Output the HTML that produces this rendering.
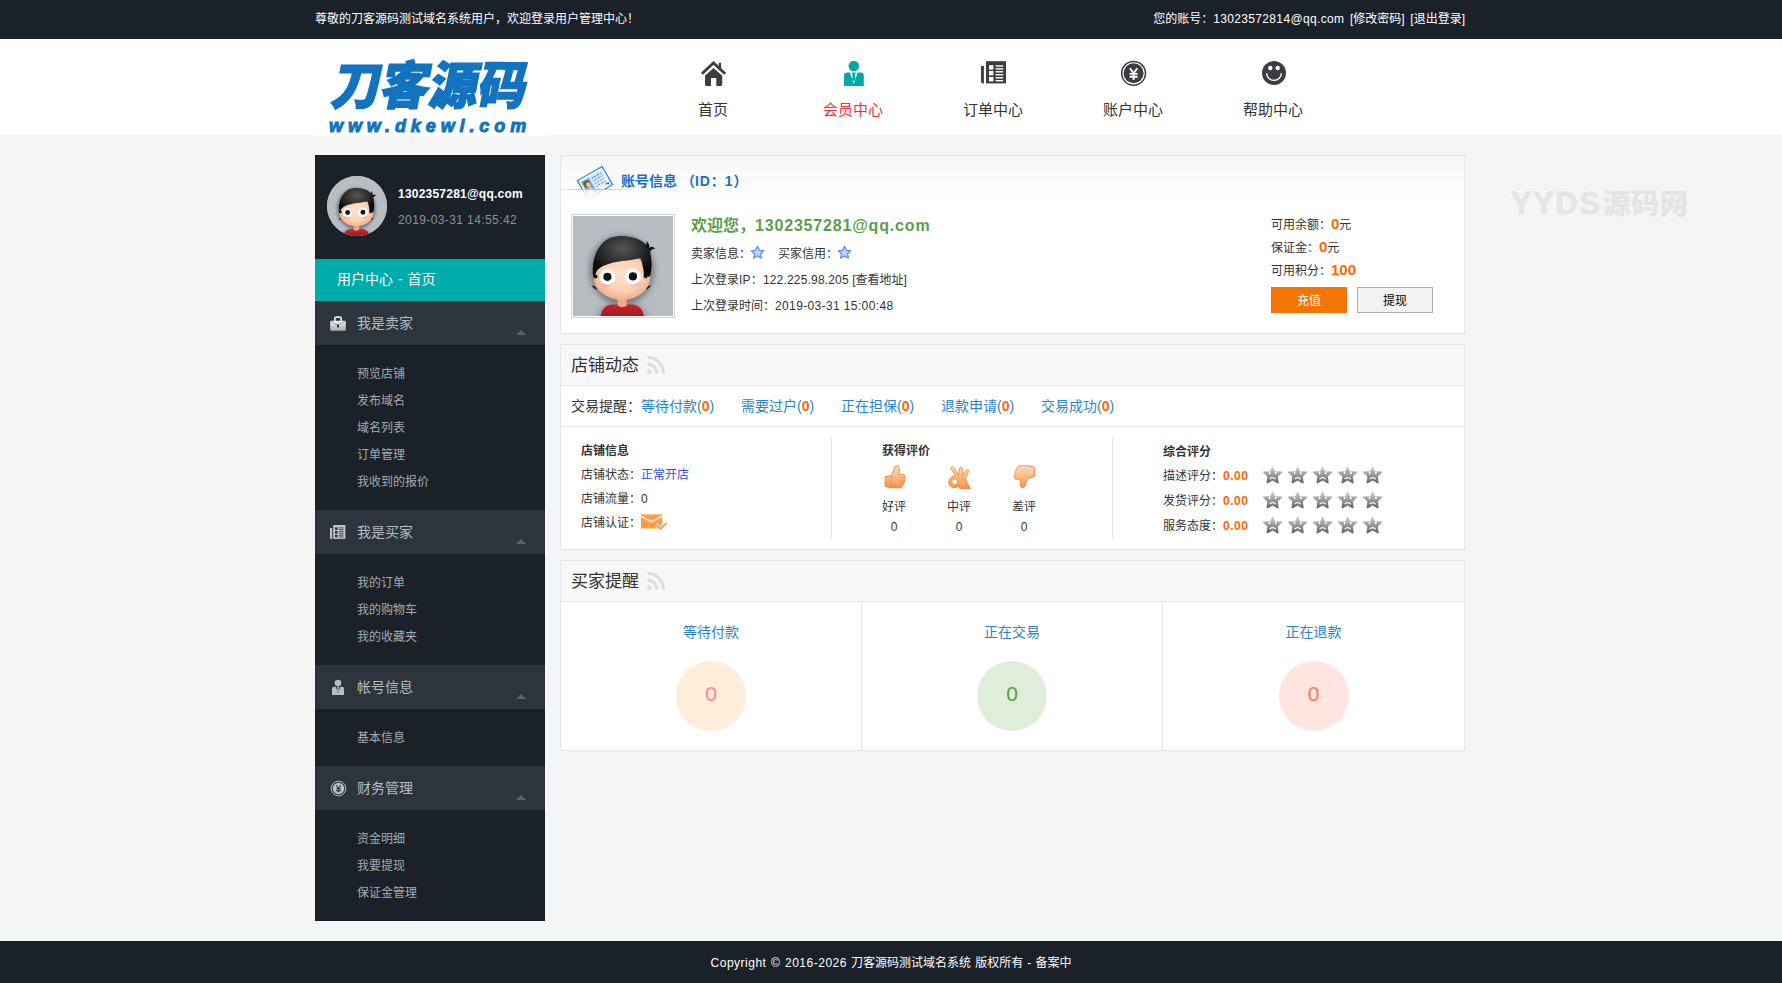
<!DOCTYPE html>
<html lang="zh-CN">
<head>
<meta charset="utf-8">
<title>用户管理中心</title>
<style>
*{margin:0;padding:0;box-sizing:border-box;}
html,body{width:1782px;height:983px;overflow:hidden;}
body{background:#f5f5f5;font-family:"Liberation Sans","Noto Sans CJK SC",sans-serif;font-size:12px;color:#333;position:relative;}
a{text-decoration:none;color:inherit;}
ul{list-style:none;}
/* top bar */
#topbar{position:absolute;left:0;top:0;width:1782px;height:39px;background:#1b2129;color:#fff;font-size:12px;line-height:39px;}
#topbar .l{position:absolute;left:315px;top:0;white-space:nowrap;}
#topbar .r{position:absolute;right:317px;top:0;white-space:nowrap;word-spacing:2.3px;}
/* header */
#header{position:absolute;left:0;top:39px;width:1782px;height:96px;background:#fff;}
#logo{position:absolute;left:315px;top:0;width:230px;height:97px;background:#fff;}
#logo .cn{position:absolute;left:12px;top:16px;white-space:nowrap;font-weight:900;font-size:51px;line-height:64px;color:#1273bf;-webkit-text-stroke:1.5px #1273bf;transform-origin:0 100%;transform:skewX(-11deg) scaleX(0.955);letter-spacing:0;}
#logo .en{position:absolute;left:14px;top:78px;white-space:nowrap;font-weight:bold;font-style:italic;font-size:18px;line-height:18px;color:#1273bf;-webkit-text-stroke:1px #1273bf;letter-spacing:4.9px;}
#nav{position:absolute;left:643px;top:0;height:96px;}
#nav a{position:absolute;top:0;width:140px;height:96px;text-align:center;font-size:15px;color:#333;}
#nav a span{position:absolute;left:0;width:140px;top:60px;line-height:22px;}
#nav a svg{position:absolute;left:55px;top:19px;width:30px;height:30px;}
#nav a.on{color:#f0323c;}
/* sidebar */
#side{position:absolute;left:315px;top:155px;width:230px;height:766px;background:#1b2129;}
#side .user{height:104px;position:relative;}
#side .user .av{position:absolute;left:12px;top:21px;width:60px;height:60px;border-radius:50%;overflow:hidden;background:#b9bec6;}
#side .user .em{position:absolute;left:83px;top:30px;color:#fff;font-size:12px;font-weight:bold;letter-spacing:.22px;line-height:18px;white-space:nowrap;}
#side .user .dt{position:absolute;left:83px;top:56px;letter-spacing:.4px;color:#8a929b;font-size:12px;line-height:18px;white-space:nowrap;}
#side .home{height:42px;background:#00abab;color:#fff;font-size:14px;line-height:40px;padding-left:22px;word-spacing:1px;}
#side h3{height:44px;background:#2c343d;color:#b5bcc4;font-size:14px;font-weight:normal;line-height:44px;padding-left:42px;position:relative;}
#side h3 svg{position:absolute;left:15px;top:14px;width:16px;height:16px;}
#side h3 i{position:absolute;left:201px;top:29px;width:0;height:0;border-left:5px solid transparent;border-right:5px solid transparent;border-bottom:5px solid #59616a;}
#side ul{padding:15px 0 15px 42px;}
#side li{height:27px;line-height:29px;color:#a4abb3;font-size:12px;}
/* main */
.panel{position:absolute;left:560px;width:905px;background:#fff;border:1px solid #e6e6e6;}

/* panel 1 */
#p1{background:linear-gradient(#f6f6f6,#fff 50px);}
#p1 .idc{position:absolute;left:10px;top:6px;width:56px;height:42px;}
#p1 .shelf{position:absolute;left:0;top:33px;width:76px;height:1px;background:linear-gradient(90deg,rgba(190,190,190,.15),rgba(190,190,190,.95) 22%,rgba(190,190,190,.95) 62%,rgba(190,190,190,0));}
#p1 .ttl{position:absolute;left:60px;top:15px;font-size:14px;font-weight:bold;color:#1b6fc2;line-height:20px;white-space:nowrap;}
#p1 .frame{position:absolute;left:10px;top:58px;width:104px;height:104px;border:1px solid #d4d4d4;background:#fff;padding:1px;}
#p1 .frame svg{display:block;width:100px;height:100px;}
#p1 .wel{position:absolute;left:130px;top:58px;font-size:16px;font-weight:bold;color:#5a9e4b;line-height:24px;white-space:nowrap;}
#p1 .ln{position:absolute;left:130px;font-size:12px;color:#333;line-height:20px;white-space:nowrap;}
#p1 .ln svg{width:15px;height:15px;vertical-align:-2px;margin-left:-1px;margin-right:1px;}
#p1 .bal{position:absolute;left:710px;font-size:12px;color:#333;line-height:22px;white-space:nowrap;}
#p1 .bal b{font-size:15px;color:#f60;}
#p1 .btn{position:absolute;top:131px;width:76px;height:26px;font-size:12px;line-height:26px;text-align:center;}
#p1 .b1{left:710px;background:#f47406;color:#fff;line-height:28px;}
#p1 .b2{left:796px;background:#f3f3f3;border:1px solid #adadad;color:#000;}
/* panel 2/3 */
.panel .hd{height:41px;box-sizing:border-box;background:#f7f7f7;border-bottom:1px solid #e6e6e6;position:relative;}
.panel .hd span{position:absolute;left:10px;top:9px;font-size:17px;line-height:24px;color:#333;white-space:nowrap;}
.panel .hd svg{position:absolute;left:85px;top:9.5px;width:20px;height:20px;}
#p2 .tips{height:41px;box-sizing:border-box;border-bottom:1px solid #e6e6e6;position:relative;font-size:14px;line-height:40px;white-space:nowrap;}
#p2 .tips span{position:absolute;left:10px;top:0;color:#333;}
#p2 .tips a{position:absolute;top:0;color:#2a85c6;}
#p2 .tips b{color:#f60;}
#p2 .col{position:absolute;top:94px;font-size:12px;color:#333;line-height:24px;white-space:nowrap;}
#p2 .col h4{font-size:12px;line-height:24px;}
#p2 .col b.o{color:#f60;letter-spacing:.5px;}
#p2 .mail{width:28px;height:18px;vertical-align:-4px;margin-left:-1px;overflow:visible;}
#p2 .vl{position:absolute;top:92px;width:1px;height:102px;background:#e6e6e6;}
#p2 .rate{position:absolute;top:120px;width:60px;text-align:center;font-size:12px;line-height:20px;color:#333;}
#p2 .rate svg{display:block;margin:0 auto 8px;width:24px;height:24px;}
#p2 .stars{position:absolute;left:701px;height:20px;}
#p2 .stars svg{width:125px;height:20px;display:block;}
#p3 .c{position:absolute;top:41px;width:301px;height:148px;box-sizing:border-box;text-align:center;}
#p3 .c a{display:block;margin-top:19px;font-size:14px;line-height:22px;color:#2a85c6;}
#p3 .c i{display:block;margin:18px auto 0;width:70px;height:70px;border-radius:50%;font-style:normal;font-size:21px;line-height:66px;}
#footer{word-spacing:.8px;position:absolute;left:0;top:941px;width:1782px;height:42px;background:#1b2129;color:#fff;font-size:12px;line-height:44px;text-align:center;}
#wm{position:absolute;left:1511px;top:184px;font-size:28.5px;font-weight:900;color:#e5e5e5;white-space:nowrap;line-height:40px;}
#wm span{font-size:31px;letter-spacing:1.5px;-webkit-text-stroke:.9px #e5e5e5;margin-right:1px;}
</style>
</head>
<body>
<svg width="0" height="0" style="position:absolute">
<defs>
<radialGradient id="gbg" cx="50%" cy="45%" r="75%"><stop offset="0" stop-color="#bec2c8"/><stop offset="1" stop-color="#b6babf"/></radialGradient>
<radialGradient id="gface" cx="50%" cy="45%" r="60%"><stop offset="0" stop-color="#ffe3cf"/><stop offset=".6" stop-color="#fbd0b2"/><stop offset="1" stop-color="#eba57c"/></radialGradient>
<radialGradient id="ghair" cx="50%" cy="30%" r="60%"><stop offset="0" stop-color="#565656"/><stop offset=".7" stop-color="#222"/><stop offset="1" stop-color="#0a0a0a"/></radialGradient>
<linearGradient id="gshirt" x1="0" y1="0" x2="0" y2="1"><stop offset="0" stop-color="#c8242c"/><stop offset="1" stop-color="#a81820"/></linearGradient>
<filter id="fblur" x="-30%" y="-30%" width="160%" height="160%"><feGaussianBlur stdDeviation="3"/></filter>
<filter id="fblur1" x="-30%" y="-30%" width="160%" height="160%"><feGaussianBlur stdDeviation="1.2"/></filter>
<linearGradient id="gth" x1="0" y1="0" x2="0" y2="1"><stop offset="0" stop-color="#ffdcc0"/><stop offset=".5" stop-color="#fdba88"/><stop offset="1" stop-color="#f7924a"/></linearGradient><linearGradient id="gth2" x1="0" y1="1" x2="0" y2="0"><stop offset="0" stop-color="#ffdcc0"/><stop offset=".5" stop-color="#fdba88"/><stop offset="1" stop-color="#f7924a"/></linearGradient>
<linearGradient id="gstar" x1="0" y1="0" x2="0" y2="1"><stop offset="0" stop-color="#d6d6d6"/><stop offset=".45" stop-color="#a2a2a2"/><stop offset="1" stop-color="#606060"/></linearGradient>
<symbol id="sadstar" viewBox="0 0 20 18" overflow="visible"><path d="M9.600 0L12 5.200 19.200 5.600 19.200 6.600 14.900 10.400 15.700 17.300 14.300 17.300 9.600 14.600 4.900 17.300 3.500 17.300 4.300 10.400 0 6.600 0 5.600 7.200 5.200Z" fill="url(#gstar)"/><rect x="5.800" y="5.500" width="1.500" height="2.800" rx=".6" fill="#fff"/><rect x="12.100" y="5.500" width="1.500" height="2.800" rx=".6" fill="#fff"/><path d="M6.600 13.200Q9.600 10.200 12.700 13.200" fill="none" stroke="#fff" stroke-width="1.200"/></symbol>
<symbol id="avatar" viewBox="0 0 100 100">
<rect width="100" height="100" fill="url(#gbg)"/>
<ellipse cx="49" cy="54" rx="32.500" ry="35" fill="#4a5058" opacity=".62" filter="url(#fblur)"/>
<ellipse cx="49" cy="100" rx="24" ry="13" fill="#5a6068" opacity=".5" filter="url(#fblur)"/>
<path d="M27.5 100Q29 90 38 88.6H60Q69.500 90 71 100Z" fill="url(#gshirt)"/>
<path d="M44.600 83H53.800V89.500Q49.200 93 44.600 89.500Z" fill="#f0a884"/>
<ellipse cx="49" cy="61" rx="28.300" ry="23" fill="url(#gface)"/>
<ellipse cx="32.500" cy="68.500" rx="5" ry="2.600" fill="#f9a9a4" opacity=".75" filter="url(#fblur1)"/>
<ellipse cx="62.500" cy="68" rx="5" ry="2.600" fill="#f9a9a4" opacity=".75" filter="url(#fblur1)"/>
<path d="M19.900 58C18.800 44 24 27 38 21.500 46 18.800 57 19.500 66 23.500 72 26.500 75 30 76.500 34 78.500 40 79.500 50 77.500 59 76.500 61 74.500 61.500 73.500 60 75.500 62 73 63.500 70.500 61 71.500 57 70 50 67.500 42 58 45 42 44.500 30 50 25 52.500 23 55.500 22.500 58.500 25.500 59 25.500 62 22 62.500 20.500 62 19.900 60 19.900 58Z" fill="url(#ghair)"/>
<path d="M72.500 30Q74.400 27.600 73.600 24.800 76.800 28 76.200 32 79.600 28.800 82.600 33.200 79.600 31.600 77.200 35.400Z" fill="#111"/>
<path d="M18.600 69.600Q22.400 69.600 24 74 20.600 73.200 18.600 69.600Z M78 69.600Q74.600 69.600 73.200 73.600 76.400 72.800 78 69.600Z" fill="#111"/>
<circle cx="34.300" cy="60.700" r="7.900" fill="#fff"/><circle cx="60" cy="60.500" r="7.900" fill="#fff"/>
<circle cx="34.400" cy="60.800" r="4.100" fill="#151515"/><circle cx="59.900" cy="60.400" r="4.100" fill="#151515"/>
</symbol>
</defs></svg>
<div id="topbar">
  <div class="l">尊敬的刀客源码测试域名系统用户，欢迎登录用户管理中心！</div>
  <div class="r">您的账号：<span style="letter-spacing:.35px">13023572814@qq.com</span> [修改密码] [退出登录]</div>
</div>
<div id="header">
  <div id="logo"><div class="cn">刀客源码</div><div class="en">www.dkewl.com</div></div>
  <div id="nav">
    <a style="left:0"><svg viewBox="0 0 30 30"><path d="M3.9 15.8L15.5 5 27.1 15.8" fill="none" stroke="#3a3e44" stroke-width="2.8"/><rect x="20.7" y="4.8" width="2.4" height="6" fill="#3a3e44"/><path d="M7 17.8L15.5 9.9 24.2 17.8V26.6Q24.2 28 22.8 28H18.3V20H13V28H8.4Q7 28 7 26.6Z" fill="#3a3e44"/></svg><span>首页</span></a>
    <a style="left:140px" class="on"><svg viewBox="0 0 30 30"><circle cx="15.8" cy="8.1" r="5.3" fill="#00a9a8"/><path d="M6 28V17.4Q6 14.4 9 14.4H12L15.8 26 19.6 14.4H22.8Q25.8 14.4 25.8 17.4V28Z" fill="#00a9a8"/><path d="M13.5 14.4H18.1L17 16.5 17.4 21.2 15.8 23.8 14.2 21.2 14.6 16.5Z" fill="#00a9a8"/></svg><span>会员中心</span></a>
    <a style="left:280px"><svg viewBox="0 0 30 30"><path d="M3 8H5.9V25.4H4.8Q3 25.4 3 23.6Z" fill="#3a3e44"/><path d="M8 3.2H28V25.4H8Z" fill="#3a3e44"/><g fill="#fff"><rect x="11" y="7.2" width="4.4" height="4.4"/><rect x="11" y="13" width="4.4" height="4.4"/><rect x="11" y="19" width="4.4" height="4.4"/><rect x="17.6" y="7.3" width="7.6" height="1.4"/><rect x="17.6" y="10.2" width="7.6" height="1.4"/><rect x="17.6" y="13.1" width="7.6" height="1.4"/><rect x="17.6" y="16" width="7.6" height="1.4"/><rect x="17.6" y="19.1" width="7.6" height="1.4"/><rect x="17.6" y="22" width="7.6" height="1.4"/></g></svg><span>订单中心</span></a>
    <a style="left:420px"><svg viewBox="0 0 30 30"><circle cx="15.6" cy="15.3" r="11.9" fill="none" stroke="#3a3e44" stroke-width="1.5"/><circle cx="15.6" cy="15.3" r="10" fill="#3a3e44"/><path d="M11.9 10.2L15.6 15.4 19.3 10.2M15.6 15.4V22M11.6 15.9H19.6M11.6 18.8H19.6" fill="none" stroke="#fff" stroke-width="1.9"/></svg><span>账户中心</span></a>
    <a style="left:560px"><svg viewBox="0 0 30 30"><circle cx="16" cy="15" r="12" fill="#3a3e44"/><circle cx="12.3" cy="10" r="2.2" fill="#fff"/><circle cx="19.7" cy="10" r="2.2" fill="#fff"/><path d="M8.6 15.2A7.4 7.2 0 0 0 23.4 15.2" fill="none" stroke="#fff" stroke-width="1.4"/></svg><span>帮助中心</span></a>
  </div>
</div>
<div id="wm"><span>YYDS</span>源码网</div>
<div id="side">
  <div class="user">
    <div class="av"><svg viewBox="0 0 100 100" width="60" height="60"><use href="#avatar"/></svg></div>
    <div class="em">1302357281@qq.com</div>
    <div class="dt">2019-03-31 14:55:42</div>
  </div>
  <div class="home">用户中心 - 首页</div>
  <h3><svg viewBox="0 0 16 16"><defs><linearGradient id="gbr" x1="0" y1="0" x2="0" y2="1"><stop offset="0" stop-color="#f0f0f0"/><stop offset="1" stop-color="#a9abae"/></linearGradient></defs><path d="M4 6V3.400Q4 1.200 6.200 1.200H9.800Q12 1.200 12 3.400V6H10.300V3.600Q10.300 2.900 9.600 2.900H6.400Q5.700 2.900 5.700 3.600V6Z" fill="#e4e4e4"/><rect x=".2" y="5.700" width="15.600" height="10.100" rx="1" fill="url(#gbr)"/><path d="M.8 6.200L8 10.400 15.200 6.200" fill="none" stroke="#8b8d90" stroke-width=".7"/><rect x="7" y="9.400" width="2" height="3" rx=".5" fill="#2a2d31"/></svg>我是卖家<i></i></h3>
  <ul><li>预览店铺</li><li>发布域名</li><li>域名列表</li><li>订单管理</li><li>我收到的报价</li></ul>
  <h3><svg viewBox="0 0 16 16"><path d="M0 4H2.200V14.900H1.200Q0 14.900 0 13.700Z" fill="#bfc3c8"/><rect x="3.200" y="1" width="12.200" height="13.900" fill="#bfc3c8"/><g fill="#2d353e"><rect x="5" y="3.400" width="2.600" height="2.600"/><rect x="5" y="7" width="2.600" height="2.600"/><rect x="5" y="10.700" width="2.600" height="2.600"/><rect x="8.800" y="3.500" width="4.800" height=".8"/><rect x="8.800" y="5.300" width="4.800" height=".8"/><rect x="8.800" y="7.100" width="4.800" height=".8"/><rect x="8.800" y="8.900" width="4.800" height=".8"/><rect x="8.800" y="10.800" width="4.800" height=".8"/><rect x="8.800" y="12.600" width="4.800" height=".8"/></g></svg>我是买家<i></i></h3>
  <ul><li>我的订单</li><li>我的购物车</li><li>我的收藏夹</li></ul>
  <h3><svg viewBox="0 0 16 16" style="overflow:visible"><circle cx="8" cy="4.100" r="3.300" fill="#b6bac1"/><path d="M2 16V9.800Q2 7.800 4 7.800H5.800L8 14.200 10.200 7.800H12Q14 7.800 14 9.800V16Z" fill="#b6bac1"/><path d="M6.900 7.800H9.100L8.600 9.200 8.900 12 8 13.400 7.100 12 7.400 9.200Z" fill="#b6bac1"/></svg>帐号信息<i></i></h3>
  <ul><li>基本信息</li></ul>
  <h3><svg viewBox="0 0 16 16" style="overflow:visible"><circle cx="8.500" cy="8.500" r="7.300" fill="none" stroke="#bcc0c6" stroke-width="1"/><circle cx="8.500" cy="8.500" r="5.700" fill="#bcc0c6"/><path d="M6.300 5.300L8.500 8.500 10.700 5.300M8.500 8.500V12.300M6.200 8.800H10.800M6.200 10.600H10.800" fill="none" stroke="#2d353e" stroke-width="1.100"/></svg>财务管理<i></i></h3>
  <ul><li>资金明细</li><li>我要提现</li><li>保证金管理</li></ul>
</div>
<div class="panel" id="p1" style="top:155px;height:179px;">
  <svg class="idc" viewBox="0 0 56 42"><defs>
<linearGradient id="gcard" x1="0" y1="0" x2="1" y2="1"><stop offset="0" stop-color="#c4def5"/><stop offset="1" stop-color="#f2f9ff"/></linearGradient>
<linearGradient id="gfade" x1="0" y1="0" x2="0" y2="1"><stop offset="0" stop-color="#fff" stop-opacity=".3"/><stop offset="1" stop-color="#fff" stop-opacity="0"/></linearGradient>
<mask id="mfade"><rect x="0" y="27.400" width="56" height="13" fill="url(#gfade)"/></mask>
<clipPath id="cup"><rect x="0" y="0" width="56" height="27.300"/></clipPath>
<g id="idcard" transform="translate(6.400 18.600) rotate(-29.900)">
<rect x="0" y="0" width="28.500" height="21" fill="#fff" stroke="#1c7ccc" stroke-width="1.100"/>
<rect x="1.900" y="1.900" width="24.700" height="17.200" fill="url(#gcard)"/>
<rect x="2.600" y="3.400" width="8.600" height="15.700" fill="#5f9fe8"/>
<ellipse cx="6.600" cy="7.600" rx="3.300" ry="3.500" fill="#8a5418"/>
<ellipse cx="7.500" cy="9.200" rx="2.200" ry="2.700" fill="#f0c47e"/>
<path d="M3.200 19.100Q3.400 12.800 7 12.600 10.800 12.800 11.200 19.100Z" fill="#e9f2fc"/>
<path d="M8.400 12.800L11.200 17.600V19.100H9.400Z" fill="#3c82dc"/>
<g stroke-width="1" stroke-dasharray="1.600 .7 2.400 .7 3 .7">
<path d="M13.600 5.200H24.600" stroke="#2b7fd6"/><path d="M13.600 8.200H24.600" stroke="#7d93ad"/><path d="M13.600 11.200H24.600" stroke="#7d93ad"/><path d="M13.600 14.200H24.600" stroke="#7d93ad"/></g>
<path d="M22.400 17.200H25.800V19.400" fill="none" stroke="#2b7fd6" stroke-width="1.200"/>
</g></defs>
<g clip-path="url(#cup)"><use href="#idcard"/></g>
<g mask="url(#mfade)"><g style="filter:grayscale(1) blur(.5px)"><use href="#idcard"/></g></g>
</svg>
  <div class="shelf"></div>
  <div class="ttl">账号信息 （<span style="letter-spacing:.9px">ID</span>：<span style="letter-spacing:.9px">1</span>）</div>
  <div class="frame"><svg viewBox="0 0 100 100"><use href="#avatar"/></svg></div>
  <div class="wel">欢迎您，<span style="letter-spacing:.82px">1302357281@qq.com</span></div>
  <div class="ln" style="top:88px">卖家信息：<svg viewBox="0 0 15 15"><path d="M7.5 1.2l1.9 4.1 4.4.5-3.3 3 .9 4.4-3.9-2.2-3.9 2.2.9-4.4-3.3-3 4.4-.5z" fill="#bcd2fb" stroke="#5a8cf0" stroke-width="1.2" stroke-linejoin="round"/></svg>　买家信用：<svg viewBox="0 0 15 15"><path d="M7.5 1.2l1.9 4.1 4.4.5-3.3 3 .9 4.4-3.9-2.2-3.9 2.2.9-4.4-3.3-3 4.4-.5z" fill="#bcd2fb" stroke="#5a8cf0" stroke-width="1.2" stroke-linejoin="round"/></svg></div>
  <div class="ln" style="top:114px">上次登录<span style="letter-spacing:.18px">IP：122.225.98.205</span> [查看地址]</div>
  <div class="ln" style="top:140px">上次登录时间：<span style="letter-spacing:.37px">2019-03-31 15:00:48</span></div>
  <div class="bal" style="top:57px">可用余额：<b>0</b>元</div>
  <div class="bal" style="top:80px">保证金：<b>0</b>元</div>
  <div class="bal" style="top:103px">可用积分：<b>100</b></div>
  <div class="btn b1">充值</div>
  <div class="btn b2">提现</div>
</div>
<div class="panel" id="p2" style="top:344px;height:206px;">
  <div class="hd"><span>店铺动态</span><svg viewBox="0 0 20 20"><circle cx="3.4" cy="16.6" r="2.3" fill="#dcdcdc"/><path d="M1.5 9.2a9.3 9.3 0 0 1 9.3 9.3" fill="none" stroke="#dcdcdc" stroke-width="3"/><path d="M1.5 2.6a15.9 15.9 0 0 1 15.9 15.9" fill="none" stroke="#dcdcdc" stroke-width="3"/></svg></div>
  <div class="tips"><span>交易提醒：</span>
    <a style="left:80px">等待付款(<b>0</b>)</a><a style="left:180px">需要过户(<b>0</b>)</a><a style="left:280px">正在担保(<b>0</b>)</a><a style="left:380px">退款申请(<b>0</b>)</a><a style="left:480px">交易成功(<b>0</b>)</a>
  </div>
  <div class="col" style="left:20px"><h4>店铺信息</h4><p>店铺状态：<a style="color:#2d4fe0">正常开店</a></p><p>店铺流量：0</p><p>店铺认证：<svg class="mail" viewBox="0 0 28 18"><rect x=".9" y="1.400" width="21.200" height="14.100" fill="#ff9c47"/><path d="M.9 3.200L11.500 8.800 22.100 3.200" fill="none" stroke="#fff" stroke-width="1.300"/><path d="M16.200 11.500L20.600 15.800 26.800 9.600" fill="none" stroke="#fff" stroke-width="3.600"/><path d="M16.400 11.700L20.600 15.800 26.600 9.800" fill="none" stroke="#ff9c47" stroke-width="1.900"/></svg></p></div>
  <div class="vl" style="left:270px"></div>
  <div class="col" style="left:321px"><h4>获得评价</h4></div>
  <div class="rate" style="left:303px"><svg viewBox="0 0 24 24"><path d="M14.800 .800C16.800 .800 17.600 2.600 17.300 4.500L16.800 9.300H20.800C22.600 9.300 23.200 10.600 22.800 11.900 23.400 13 23.200 14.300 22.400 15 22.800 16.300 22.400 17.400 21.600 18 21.800 19.300 21.300 20.300 20.400 20.800 20.200 22 19.400 22.800 18 22.800H9L3.200 21.500V11.800L9.200 10.600C10.800 8 11.800 5 12.400 2.800 12.800 1.400 13.600 .800 14.800 .800Z" fill="url(#gth)" stroke="#e8772c" stroke-width=".8"/><path d="M17 12.200H21.800M17.400 15.200H21.600M17.400 18.100H21M9.200 10.800V22.400" fill="none" stroke="#ee8a44" stroke-width=".6"/></svg>好评<br>0</div>
  <div class="rate" style="left:368px"><svg viewBox="0 0 24 24"><path d="M4.400 2.400C5.200 1.600 6.300 1.900 6.900 2.900L11.300 10 12.700 3.400C13 2 15.300 2 15.300 3.600L15.200 10.200 19.300 5.400C20.300 4.200 22.200 5.200 21.600 6.700L18.400 13.600C19.400 16.800 21.400 19.800 23.600 23.400H12.600L11.400 21.200C7.400 24.400 1.800 21.800 1.800 16.900 1.800 13.200 5.200 10.600 8.800 11.400L4.600 4.600C4.100 3.800 4 3 4.400 2.400Z" fill="url(#gth)" stroke="#e8772c" stroke-width=".8"/><circle cx="7.600" cy="16.800" r="2.900" fill="#fff" stroke="#e8772c" stroke-width=".7"/><path d="M11.300 10.400L13.400 14.400M15.200 10.600L15.600 14" fill="none" stroke="#ee8a44" stroke-width=".6"/></svg>中评<br>0</div>
  <div class="rate" style="left:433px"><svg viewBox="0 0 24 24"><g transform="rotate(180 12 12) translate(-1.600 .4)"><path fill="url(#gth2)" d="M14.800 .800C16.800 .800 17.600 2.600 17.300 4.500L16.800 9.300H20.800C22.600 9.300 23.200 10.600 22.800 11.900 23.400 13 23.200 14.300 22.400 15 22.800 16.300 22.400 17.400 21.600 18 21.800 19.300 21.300 20.300 20.400 20.800 20.200 22 19.400 22.800 18 22.800H9L3.200 21.500V11.800L9.200 10.600C10.800 8 11.800 5 12.400 2.800 12.800 1.400 13.600 .800 14.800 .800Z" stroke="#e8772c" stroke-width=".8"/></g></svg>差评<br>0</div>
  <div class="vl" style="left:551px"></div>
  <div class="col" style="left:602px;top:95px;line-height:25px"><h4>综合评分</h4><p>描述评分：<b class="o">0.00</b></p><p>发货评分：<b class="o">0.00</b></p><p>服务态度：<b class="o">0.00</b></p></div>
  <div class="stars" style="top:120px"><svg viewBox="0 0 125 20"><use href="#sadstar" x="1" y="1" width="20" height="18"/><use href="#sadstar" x="26" y="1" width="20" height="18"/><use href="#sadstar" x="51" y="1" width="20" height="18"/><use href="#sadstar" x="76" y="1" width="20" height="18"/><use href="#sadstar" x="101" y="1" width="20" height="18"/></svg></div>
  <div class="stars" style="top:145px"><svg viewBox="0 0 125 20"><use href="#sadstar" x="1" y="1" width="20" height="18"/><use href="#sadstar" x="26" y="1" width="20" height="18"/><use href="#sadstar" x="51" y="1" width="20" height="18"/><use href="#sadstar" x="76" y="1" width="20" height="18"/><use href="#sadstar" x="101" y="1" width="20" height="18"/></svg></div>
  <div class="stars" style="top:170px"><svg viewBox="0 0 125 20"><use href="#sadstar" x="1" y="1" width="20" height="18"/><use href="#sadstar" x="26" y="1" width="20" height="18"/><use href="#sadstar" x="51" y="1" width="20" height="18"/><use href="#sadstar" x="76" y="1" width="20" height="18"/><use href="#sadstar" x="101" y="1" width="20" height="18"/></svg></div>
</div>
<div class="panel" id="p3" style="top:560px;height:191px;">
  <div class="hd"><span>买家提醒</span><svg viewBox="0 0 20 20"><circle cx="3.4" cy="16.6" r="2.3" fill="#dcdcdc"/><path d="M1.5 9.2a9.3 9.3 0 0 1 9.3 9.3" fill="none" stroke="#dcdcdc" stroke-width="3"/><path d="M1.5 2.6a15.9 15.9 0 0 1 15.9 15.9" fill="none" stroke="#dcdcdc" stroke-width="3"/></svg></div>
  <div class="c" style="left:0;border-right:1px solid #e6e6e6"><a>等待付款</a><i style="background:#ffeddc;color:#ff8398">0</i></div>
  <div class="c" style="left:301px;border-right:1px solid #e6e6e6"><a>正在交易</a><i style="background:#deeedb;color:#559c46">0</i></div>
  <div class="c" style="left:602px"><a>正在退款</a><i style="background:#ffe4e0;color:#f7795a">0</i></div>
</div>
<div id="footer"><span style="letter-spacing:.5px">Copyright © 2016-2026</span> 刀客源码测试域名系统 版权所有 - 备案中</div>
</body>
</html>
